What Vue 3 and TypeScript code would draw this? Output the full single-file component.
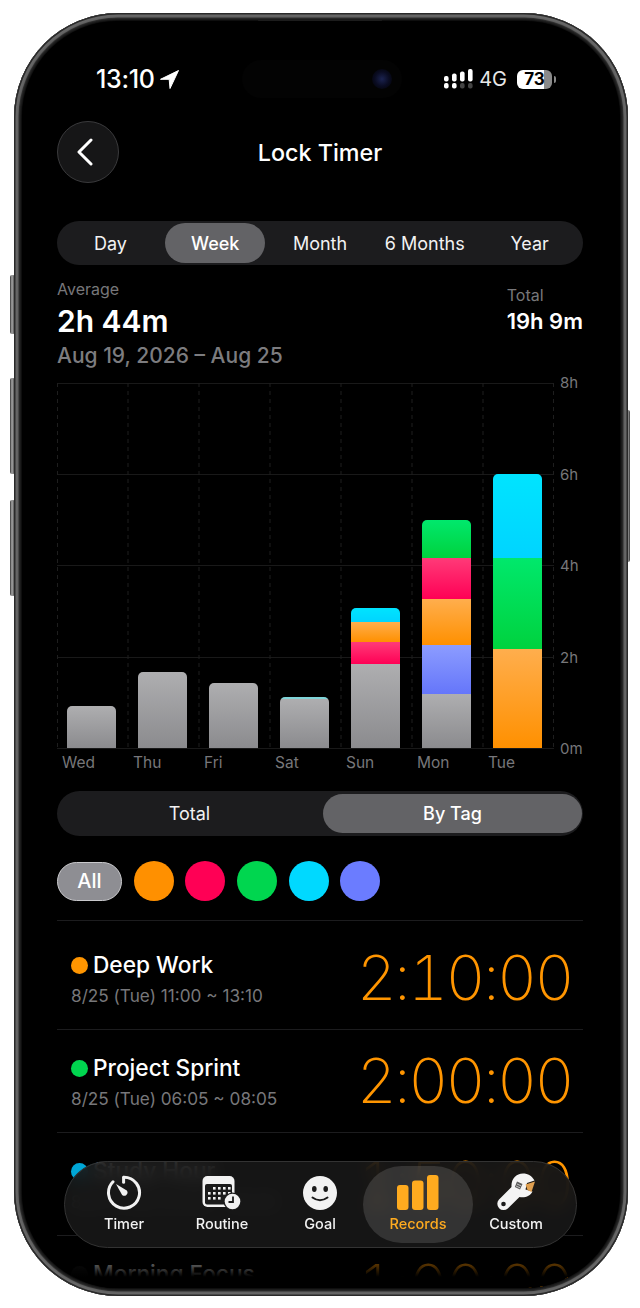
<script setup lang="ts">
interface Seg { color: string; h: number }
const segs: Record<string, string> = {
  gray: 'linear-gradient(#aeaeb0, #8b8b8e)',
  orange: 'linear-gradient(#ffae4d, #ff9000)',
  red: 'linear-gradient(#ff3a78, #ff0055)',
  green: 'linear-gradient(#00e86c, #00d23e)',
  cyan: 'linear-gradient(#00e4ff, #00d4ff)',
  blue: 'linear-gradient(#8c9cff, #6576fa)',
  teal: '#7fd4d8',
}
const bars: { day: string; parts: Seg[] }[] = [
  { day: 'Wed', parts: [{ color: 'gray', h: 42 }] },
  { day: 'Thu', parts: [{ color: 'gray', h: 76 }] },
  { day: 'Fri', parts: [{ color: 'gray', h: 65 }] },
  { day: 'Sat', parts: [{ color: 'teal', h: 2 }, { color: 'gray', h: 49 }] },
  { day: 'Sun', parts: [{ color: 'cyan', h: 14 }, { color: 'orange', h: 20 }, { color: 'red', h: 22 }, { color: 'gray', h: 84 }] },
  { day: 'Mon', parts: [{ color: 'green', h: 38 }, { color: 'red', h: 41 }, { color: 'orange', h: 46 }, { color: 'blue', h: 49 }, { color: 'gray', h: 54 }] },
  { day: 'Tue', parts: [{ color: 'cyan', h: 84 }, { color: 'green', h: 91 }, { color: 'orange', h: 99 }] },
]
const ranges = ['Day', 'Week', 'Month', '6 Months', 'Year']
const tagColors = ['#ff9000', '#ff0055', '#00d64f', '#00d9ff', '#6b7cff']
const records = [
  { dot: '#ff9500', name: 'Deep Work', when: '8/25 (Tue) 11:00 ~ 13:10', time: '2:10:00' },
  { dot: '#00d64f', name: 'Project Sprint', when: '8/25 (Tue) 06:05 ~ 08:05', time: '2:00:00' },
  { dot: '#00a6d6', name: 'Study Hour', when: '8/25 (Tue) 03:50 ~ 05:40', time: '1:50:00' },
  { dot: '#161616', name: 'Morning Focus', when: '8/24 (Mon) 09:00 ~ 10:00', time: '1:00:00' },
]
const axis = ['8h', '6h', '4h', '2h', '0m']
</script>

<template>
  <div class="stage">
    <div class="btn vol-a"></div>
    <div class="btn vol-b"></div>
    <div class="btn vol-c"></div>
    <div class="btn power"></div>
    <div class="phone">
      <div class="speaker"></div>
      <div class="screen">
        <div class="status">
          <div class="clock">
            <span>13:10</span>
            <svg width="19" height="19" viewBox="0 0 19 19"><path d="M18.500.5 .5 9.300h8.700l.8 9.200z" fill="#fff" stroke="#fff" stroke-linejoin="round" /></svg>
          </div>
          <div class="island">
            <div class="lens"></div>
          </div>
          <div class="indicators">
            <svg width="29" height="20" viewBox="0 0 29 20">
              <g fill="#fff">
                <rect x="0" y="7" width="4.600" height="5.500" rx="2" />
                <rect x="0" y="14" width="4.600" height="5.500" rx="2" />
                <rect x="8" y="4.500" width="4.600" height="8" rx="2" />
                <rect x="8" y="14" width="4.600" height="5.500" rx="2" />
                <rect x="16" y="2.500" width="4.600" height="10" rx="2" />
                <rect x="24" y="0" width="4.600" height="12.500" rx="2" />
              </g>
              <g fill="#444">
                <rect x="16" y="14" width="4.600" height="5.500" rx="2" />
                <rect x="24" y="14" width="4.600" height="5.500" rx="2" />
              </g>
            </svg>
            <span class="net">4G</span>
            <div class="battery"><span>73</span></div>
            <div class="nub"></div>
          </div>
        </div>

        <header class="nav">
          <button class="back">
            <svg width="20" height="28" viewBox="0 0 20 28"><path d="M16 2 4 14l12 12" fill="none" stroke="#fff" stroke-width="3" stroke-linecap="round" stroke-linejoin="round" /></svg>
          </button>
          <h1>Lock Timer</h1>
        </header>

        <div class="content">
          <div class="ranges">
            <div v-for="r in ranges" :key="r" class="range" :class="{ on: r === 'Week' }">{{ r }}</div>
          </div>

          <div class="summary">
            <div>
              <div class="avg-label">Average</div>
              <div class="avg">2h 44m</div>
              <div class="dates">Aug 19, 2026 – Aug 25</div>
            </div>
            <div class="total">
              <div class="total-label">Total</div>
              <div class="total-value">19h 9m</div>
            </div>
          </div>

          <div class="chart">
            <div class="plot">
              <svg class="gridlines" width="497" height="366" viewBox="0 0 497 366">
                <g stroke="#191919" stroke-width="1">
                  <line x1="0" y1="0.500" x2="497" y2="0.500" />
                  <line x1="0" y1="91.500" x2="497" y2="91.500" />
                  <line x1="0" y1="182.500" x2="497" y2="182.500" />
                  <line x1="0" y1="274.500" x2="497" y2="274.500" />
                  <line x1="0" y1="365.500" x2="497" y2="365.500" />
                </g>
                <g stroke="#1e1e1e" stroke-width="1" stroke-dasharray="4 4">
                  <line x1="0.500" y1="0" x2="0.500" y2="366" />
                  <line x1="71" y1="0" x2="71" y2="366" />
                  <line x1="142" y1="0" x2="142" y2="366" />
                  <line x1="213" y1="0" x2="213" y2="366" />
                  <line x1="284" y1="0" x2="284" y2="366" />
                  <line x1="355" y1="0" x2="355" y2="366" />
                  <line x1="426" y1="0" x2="426" y2="366" />
                  <line x1="496.500" y1="0" x2="496.500" y2="366" />
                </g>
              </svg>
              <div v-for="b in bars" :key="b.day" class="slot">
                <div class="bar">
                  <div v-for="(p, i) in b.parts" :key="i" :style="{ height: p.h + 'px', background: segs[p.color] }"></div>
                </div>
              </div>
            </div>
            <div class="axis">
              <span v-for="a in axis" :key="a">{{ a }}</span>
            </div>
            <div class="days">
              <span v-for="b in bars" :key="b.day">{{ b.day }}</span>
            </div>
          </div>

          <div class="mode">
            <div class="mode-item first">Total</div>
            <div class="mode-item on">By Tag</div>
          </div>

          <div class="tags">
            <div class="all">All</div>
            <div v-for="c in tagColors" :key="c" class="tag" :style="{ background: c }"></div>
          </div>

          <div class="list">
            <div v-for="r in records" :key="r.name" class="record">
              <div class="record-left">
                <div class="record-name"><i :style="{ background: r.dot }"></i>{{ r.name }}</div>
                <div class="record-when">{{ r.when }}</div>
              </div>
              <div class="record-time">{{ r.time }}</div>
            </div>
          </div>
        </div>

        <div class="fade"></div>

        <nav class="tabs">
          <div class="tab">
            <svg width="36" height="36" viewBox="0 0 36 36" fill="none">
              <path d="M18 2.200A15.500 15.500 0 1 1 7 6.800" stroke="#f2f2f2" stroke-width="3" stroke-linecap="round" />
              <path d="M17.600 2.200v5" stroke="#f2f2f2" stroke-width="3" stroke-linecap="round" />
              <path d="M10 9 20.800 15.600a3.200 3.200 0 0 1-4.700 4.300z" fill="#f2f2f2" />
            </svg>
            <span>Timer</span>
          </div>
          <div class="tab">
            <svg width="40" height="36" viewBox="0 0 40 36">
              <rect x="0.500" y="1" width="32" height="31" rx="5" fill="#f2f2f2" />
              <rect x="3" y="9" width="27" height="20.500" rx="2" fill="#1b1b1b" />
              <g fill="#f2f2f2">
                <rect x="11" y="12" width="2.600" height="2.600" /><rect x="16" y="12" width="2.600" height="2.600" /><rect x="21" y="12" width="2.600" height="2.600" /><rect x="26" y="12" width="2.600" height="2.600" />
                <rect x="6" y="17" width="2.600" height="2.600" /><rect x="11" y="17" width="2.600" height="2.600" /><rect x="16" y="17" width="2.600" height="2.600" /><rect x="21" y="17" width="2.600" height="2.600" /><rect x="26" y="17" width="2.600" height="2.600" />
                <rect x="6" y="22" width="2.600" height="2.600" /><rect x="11" y="22" width="2.600" height="2.600" /><rect x="16" y="22" width="2.600" height="2.600" />
              </g>
              <circle cx="30.500" cy="26.500" r="9" fill="#1b1b1b" />
              <circle cx="30.500" cy="26.500" r="7.800" fill="#f2f2f2" />
              <path d="M31 21.500v5.500h-4.500" fill="none" stroke="#1b1b1b" stroke-width="1.800" />
            </svg>
            <span>Routine</span>
          </div>
          <div class="tab">
            <svg width="36" height="36" viewBox="0 0 36 36">
              <circle cx="18" cy="18" r="17" fill="#f2f2f2" />
              <ellipse cx="12.300" cy="14" rx="2.300" ry="2.900" fill="#1b1b1b" />
              <ellipse cx="23.700" cy="14" rx="2.300" ry="2.900" fill="#1b1b1b" />
              <path d="M10.500 22.500q7.500 5.500 15 0" fill="none" stroke="#1b1b1b" stroke-width="2" stroke-linecap="round" />
            </svg>
            <span>Goal</span>
          </div>
          <div class="tab active">
            <svg width="42" height="36" viewBox="0 0 42 36">
              <g fill="#ffab1f">
                <rect x="0" y="10" width="11.500" height="25" rx="3" />
                <rect x="15" y="5.500" width="11.500" height="29.500" rx="3" />
                <rect x="30" y="0" width="11.500" height="35" rx="3" />
              </g>
            </svg>
            <span>Records</span>
          </div>
          <div class="tab">
            <svg width="40" height="38" viewBox="0 0 40 38">
              <path d="M27 .5C20 .5 15 6 15.500 14L3 26.500a6.300 6.300 0 0 0 8.800 9L23.500 24C29 25 34.500 23 36.500 18.500L29.500 16.500 31 10 38.500 7.500C36 3 32 .5 27 .5z" fill="#f4f4f4" />
              <circle cx="7.500" cy="31" r="2.300" fill="#1b1b1b" />
              <path d="M29.500 11.500 39 8.500 35.500 19 31.500 17z" fill="#e0a050" />
              <path d="M21 8.500 26.500 11 24 16.500 18.800 14z" fill="#5a5a5a" />
              <path d="M21 11 25 12.800M20 13 24 14.800" stroke="#ddd" stroke-width=".8" />
            </svg>
            <span>Custom</span>
          </div>
        </nav>
      </div>
    </div>
  </div>
</template>

<style>
html, body { margin: 0; background: #fff; }
</style>

<style scoped>
.stage {
  position: relative;
  width: 640px;
  height: 1308px;
  padding: 13px 12px 12px 14px;
  box-sizing: border-box;
  background: #fff;
  font-family: Inter, "Liberation Sans", sans-serif;
  color: #fff;
}
.btn {
  position: absolute;
  width: 5px;
  background: linear-gradient(90deg, #333, #aaa 40%, #2a2a2a);
  border-radius: 2px;
}
.vol-a { left: 10px; top: 275px; height: 59px; }
.vol-b { left: 10px; top: 378px; height: 96px; }
.vol-c { left: 10px; top: 500px; height: 96px; }
.power { left: 625px; top: 410px; height: 152px; width: 5px; background: linear-gradient(90deg, #2a2a2a, #999 60%, #333); }
.phone {
  position: relative;
  height: 1283px;
  box-sizing: border-box;
  padding: 8px;
  border-radius: 104px;
  background: #000;
  box-shadow: inset 0 0 0 1.500px #2a2a2a, inset 0 0 1px 4.500px #666, inset 0 0 3px 7px #2a2a2a;
}
.speaker {
  position: absolute;
  left: 244px;
  top: 7px;
  width: 124px;
  height: 3px;
  background: #1c1c1c;
  border-radius: 0 0 3px 3px;
}
.screen {
  position: relative;
  height: 100%;
  border-radius: 96px;
  background: #000;
  overflow: hidden;
}
.status {
  height: 60px;
  padding: 28px 64px 0 74px;
  display: flex;
  align-items: center;
  justify-content: space-between;
}
.clock { display: flex; align-items: center; gap: 5px; font-size: 25px; font-weight: 500; letter-spacing: -0.3px; }
.island {
  position: absolute;
  left: 220px;
  top: 39px;
  width: 160px;
  height: 38px;
  border-radius: 20px;
  background: #030303;
}
.lens {
  position: absolute;
  right: 10px;
  top: 9px;
  width: 20px;
  height: 20px;
  border-radius: 50%;
  background: radial-gradient(circle, #1b2350 0, #0a0c22 50%, #000 100%);
}
.indicators { display: flex; align-items: center; }
.net { margin-left: 6px; font-size: 20px; font-weight: 400; color: #e8e8e8; }
.battery {
  width: 35px;
  height: 19px;
  margin-left: 10px;
  border-radius: 6px;
  background: linear-gradient(90deg, #fff 77%, #8a8a8a 77%);
  color: #000;
  font-size: 17px;
  font-weight: 700;
  line-height: 19px;
  text-align: center;
}
.nub { width: 2px; height: 7px; margin-left: 2px; background: #888; border-radius: 0 2px 2px 0; }
.nav {
  position: relative;
  height: 62px;
  margin-top: 12px;
  padding-left: 35px;
  display: flex;
  align-items: center;
}
.back {
  width: 62px;
  height: 62px;
  padding: 0 6px 0 0;
  border-radius: 50%;
  border: 1px solid #3a3a3c;
  background: #161617;
  display: flex;
  align-items: center;
  justify-content: center;
}
.nav h1 {
  position: absolute;
  left: 0;
  right: 0;
  margin: 0;
  padding-right: 2px;
  text-align: center;
  font-size: 23.300px;
  font-weight: 500;
}
.content { padding: 38px 37px 0 35px; }
.ranges {
  display: grid;
  grid-template-columns: repeat(5, 1fr);
  height: 44px;
  padding: 2px 1px;
  box-sizing: border-box;
  border-radius: 22px;
  background: #1c1c1e;
}
.range {
  display: flex;
  align-items: center;
  justify-content: center;
  border-radius: 20px;
  font-size: 18px;
  color: #f2f2f2;
}
.range.on { margin: 0 2.500px; background: #636366; font-weight: 500; color: #fff; }
.summary {
  display: flex;
  justify-content: space-between;
  height: 118px;
  padding-top: 14px;
  box-sizing: border-box;
}
.avg-label { font-size: 16px; line-height: 20px; color: #77777a; }
.avg { margin-top: 2px; font-size: 30px; line-height: 40px; font-weight: 600; }
.dates { margin-top: 2px; font-size: 21px; line-height: 26px; font-weight: 500; color: #7c7c7f; }
.total { padding-top: 6px; }
.total-label { font-size: 16px; line-height: 20px; color: #77777a; }
.total-value { margin-top: 2px; font-size: 22px; line-height: 28px; font-weight: 600; }
.chart {
  display: grid;
  grid-template-columns: 497px 1fr;
  grid-template-rows: 366px auto;
}
.plot {
  position: relative;
  display: grid;
  grid-template-columns: repeat(7, 71px);
  align-items: end;
}
.gridlines { position: absolute; left: 0; top: 0; }
.slot { position: relative; padding: 0 12px 1px 10px; }
.bar { border-radius: 5px 5px 0 0; overflow: hidden; }
.axis {
  display: flex;
  flex-direction: column;
  justify-content: space-between;
  padding-left: 6px;
  margin: -9px 0 -9px;
  font-size: 15px;
  line-height: 18px;
  color: #77777a;
}
.days {
  grid-column: 1 / 3;
  display: grid;
  grid-template-columns: repeat(7, 71px);
  padding: 5px 0 0 5px;
  font-size: 15.500px;
  line-height: 18px;
  color: #77777a;
}
.mode {
  display: grid;
  grid-template-columns: 1fr 259px;
  height: 45px;
  margin-top: 19px;
  padding: 3px 1px 3px 3px;
  box-sizing: border-box;
  border-radius: 23px;
  background: #1c1c1e;
}
.mode-item { display: flex; align-items: center; justify-content: center; font-size: 18px; color: #f2f2f2; border-radius: 20px; }
.mode-item.first { padding-right: 4px; }
.mode-item.on { background: #636366; color: #fff; font-weight: 500; }
.tags { display: flex; align-items: center; gap: 11.700px; margin-top: 25px; height: 40px; }
.all {
  width: 65px;
  height: 39px;
  box-sizing: border-box;
  border: 1.500px solid #c9c9cc;
  border-radius: 20px;
  background: #8e8e93;
  font-size: 20px;
  font-weight: 500;
  display: flex;
  align-items: center;
  justify-content: center;
}
.tag { width: 40px; height: 40px; border-radius: 50%; }
.list { margin-top: 19px; padding-top: 6px; border-top: 1px solid #1c1c1e; }
.record {
  display: flex;
  align-items: center;
  justify-content: space-between;
  height: 103px;
  box-sizing: border-box;
  border-bottom: 1px solid #1c1c1e;
  padding: 0 11px 0 14px;
}
.record-left { padding-top: 1px; }
.record-name { display: flex; align-items: center; gap: 5px; font-size: 22.700px; font-weight: 500; line-height: 30px; }
.record-name i { width: 17px; height: 17px; border-radius: 50%; }
.record-when { margin-top: 5px; font-size: 17.200px; line-height: 22px; color: #77777a; }
.record-time { font-size: 62px; font-weight: 250; line-height: 70px; letter-spacing: -2.600px; color: #ff9500; font-variant-numeric: tabular-nums; }
.fade {
  position: absolute;
  left: 0;
  right: 0;
  bottom: 0;
  height: 40px;
  background: linear-gradient(rgba(0,0,0,.3) 0%, rgba(0,0,0,.7) 45%, #000 72%);
}
.tabs {
  position: absolute;
  left: 42px;
  bottom: 40px;
  width: 513px;
  height: 87px;
  padding: 0 10px;
  box-sizing: border-box;
  display: grid;
  grid-template-columns: repeat(5, 98px);
  align-items: center;
  border-radius: 44px;
  border: 1px solid #333;
  background: rgba(24,24,25,.86);
  backdrop-filter: blur(9px);
}
.tab {
  height: 77px;
  display: flex;
  flex-direction: column;
  align-items: center;
  justify-content: flex-end;
  gap: 4px;
  padding-bottom: 10px;
  box-sizing: border-box;
  font-size: 14.500px;
  font-weight: 500;
  line-height: 18px;
  color: #f2f2f2;
}
.tab svg { flex: none; }
.tab.active {
  width: 110px;
  justify-self: center;
  border-radius: 40px;
  background: rgba(255,255,255,.13);
  color: #ffab1f;
}
</style>
